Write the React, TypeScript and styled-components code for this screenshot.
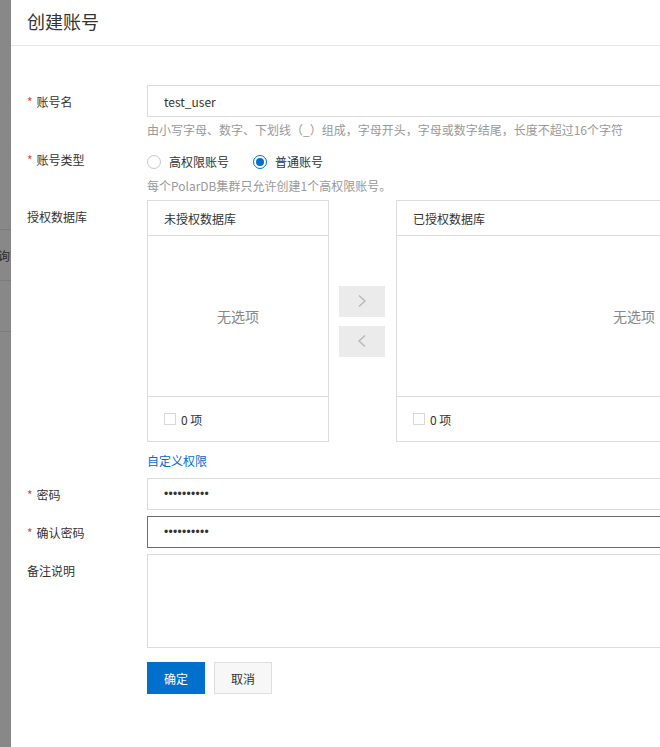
import React from "react";
import styled, { createGlobalStyle } from "styled-components";

const GlobalStyle = createGlobalStyle`
  html, body {
    margin: 0;
    padding: 0;
    overflow: hidden;
    background: #fff;
  }
  body {
    font-family: "Noto Sans CJK SC", "Liberation Sans", sans-serif;
    font-size: 12px;
    color: #333;
  }
  * {
    box-sizing: border-box;
  }
`;

const Page = styled.div`
  display: flex;
  width: 660px;
  height: 747px;
  overflow: hidden;
`;

// dimmed list page sitting behind the drawer
const Backdrop = styled.div`
  width: 11px;
  flex-shrink: 0;
  background: #888;
  overflow: hidden;
  display: flex;
  flex-direction: column;
`;

const BackdropRow = styled.div<{ $h: number }>`
  height: ${(p) => p.$h}px;
  flex-shrink: 0;
  border-bottom: 1px solid #7c7c7c;
  display: flex;
  align-items: center;
  white-space: nowrap;
  color: #2a2a2a;
  span {
    margin-left: -14px;
  }
`;

const Drawer = styled.div`
  width: 1000px;
  flex-shrink: 0;
  background: #fff;
  display: flex;
  flex-direction: column;
`;

const DrawerHeader = styled.div`
  height: 46px;
  padding-left: 16px;
  display: flex;
  align-items: center;
  border-bottom: 1px solid #e8e8e8;
  font-size: 18px;
  color: #333;
  padding-bottom: 4px;
`;

const DrawerBody = styled.div`
  padding: 39px 0 0 16px;
  display: flex;
  flex-direction: column;
`;

const FormItem = styled.div<{ $gap?: number }>`
  display: flex;
  margin-bottom: ${(p) => p.$gap ?? 5}px;
`;

const Label = styled.div`
  width: 120px;
  flex-shrink: 0;
  line-height: 32px;
  padding-top: 1px;
  color: #333;
`;

const Required = styled.span`
  color: #d9453a;
  margin-right: 4px;
`;

const Control = styled.div`
  display: flex;
  flex-direction: column;
`;

const TextInput = styled.input<{ $focused?: boolean }>`
  width: 700px;
  height: 32px;
  padding: 0 16px;
  border: 1px solid ${(p) => (p.$focused ? "#6b6b6b" : "#dcdcdc")};
  outline: none;
  font-family: inherit;
  font-size: 12px;
  color: #333;
  background: #fff;
  &[type="password"] {
    font-family: "Liberation Sans", sans-serif;
    letter-spacing: 0.3px;
  }
`;

const Hint = styled.div<{ $top?: number }>`
  margin-top: ${(p) => p.$top ?? 4}px;
  line-height: 18px;
  color: #999;
`;

const RadioGroup = styled.div`
  height: 32px;
  padding-top: 5px;
  display: flex;
  align-items: center;
  gap: 24px;
`;

const RadioItem = styled.label`
  display: flex;
  align-items: center;
  gap: 8px;
  color: #333;
`;

const RadioDot = styled.span<{ $checked?: boolean }>`
  width: 14px;
  height: 14px;
  border-radius: 50%;
  border: 1px solid ${(p) => (p.$checked ? "#0070cc" : "#c4c6cf")};
  display: flex;
  align-items: center;
  justify-content: center;
  &::after {
    content: "";
    width: 8px;
    height: 8px;
    border-radius: 50%;
    background: ${(p) => (p.$checked ? "#0070cc" : "transparent")};
  }
`;

const Transfer = styled.div`
  display: flex;
  align-items: center;
`;

const Panel = styled.div<{ $w: number }>`
  width: ${(p) => p.$w}px;
  height: 242px;
  border: 1px solid #dcdcdc;
  display: flex;
  flex-direction: column;
  flex-shrink: 0;
`;

const PanelHeader = styled.div`
  height: 35px;
  padding: 0 16px;
  border-bottom: 1px solid #dcdcdc;
  display: flex;
  align-items: center;
  color: #333;
`;

const PanelBody = styled.div`
  height: 161px;
  border-bottom: 1px solid #dcdcdc;
  display: flex;
  align-items: center;
  justify-content: center;
  font-size: 14px;
  color: #888;
`;

const PanelFooter = styled.div`
  flex: 1;
  padding: 0 16px;
  display: flex;
  align-items: center;
  gap: 5px;
  color: #333;
`;

const Checkbox = styled.span`
  width: 12px;
  height: 12px;
  border: 1px solid #d8d8d8;
  background: #fff;
`;

const MoveButtons = styled.div`
  display: flex;
  flex-direction: column;
  gap: 9px;
  margin: 0 11px 0 10px;
`;

const MoveButton = styled.button`
  width: 46px;
  height: 31px;
  border: none;
  background: #ebebeb;
  display: flex;
  align-items: center;
  justify-content: center;
  padding: 0;
  cursor: not-allowed;
`;

const LinkRow = styled.div`
  line-height: 28px;
  color: #0070cc;
  cursor: pointer;
`;

const TextArea = styled.textarea`
  width: 700px;
  height: 94px;
  border: 1px solid #dcdcdc;
  resize: none;
  outline: none;
  padding: 6px 16px;
  font-family: inherit;
  font-size: 12px;
`;

const Actions = styled.div`
  display: flex;
  gap: 9px;
  margin-top: 14px;
  padding-left: 120px;
`;

const Button = styled.button<{ $primary?: boolean }>`
  min-width: 58px;
  height: 32px;
  padding: 0 16px;
  font-family: inherit;
  font-size: 12px;
  border: 1px solid ${(p) => (p.$primary ? "#0070cc" : "#dedede")};
  background: ${(p) => (p.$primary ? "#0070cc" : "#f7f7f7")};
  color: ${(p) => (p.$primary ? "#fff" : "#333")};
  cursor: pointer;
`;

const Chevron = ({ dir }: { dir: "left" | "right" }) => (
  <svg width="10" height="14" viewBox="0 0 10 14">
    <path
      d={dir === "right" ? "M2 1.5 L8 7 L2 12.5" : "M8 1.5 L2 7 L8 12.5"}
      fill="none"
      stroke="#b8b8b8"
      strokeWidth="1.4"
    />
  </svg>
);

const TransferPanel = ({ title, width }: { title: string; width: number }) => (
  <Panel $w={width}>
    <PanelHeader>{title}</PanelHeader>
    <PanelBody>无选项</PanelBody>
    <PanelFooter>
      <Checkbox />
      <span>0 项</span>
    </PanelFooter>
  </Panel>
);

const App = () => {
  return (
    <Page>
      <GlobalStyle />
      <Backdrop>
        <BackdropRow $h={230} />
        <BackdropRow $h={51}>
          <span>查询到</span>
        </BackdropRow>
        <BackdropRow $h={51} />
      </Backdrop>
      <Drawer>
        <DrawerHeader>创建账号</DrawerHeader>
        <DrawerBody>
          <FormItem $gap={4}>
            <Label>
              <Required>*</Required>账号名
            </Label>
            <Control>
              <TextInput defaultValue="test_user" />
              <Hint>
                由小写字母、数字、下划线（_）组成，字母开头，字母或数字结尾，长度不超过16个字符
              </Hint>
            </Control>
          </FormItem>

          <FormItem>
            <Label>
              <Required>*</Required>账号类型
            </Label>
            <Control>
              <RadioGroup>
                <RadioItem>
                  <RadioDot />
                  高权限账号
                </RadioItem>
                <RadioItem>
                  <RadioDot $checked />
                  普通账号
                </RadioItem>
              </RadioGroup>
              <Hint $top={2}>每个PolarDB集群只允许创建1个高权限账号。</Hint>
            </Control>
          </FormItem>

          <FormItem $gap={5}>
            <Label>授权数据库</Label>
            <Control>
              <Transfer>
                <TransferPanel title="未授权数据库" width={182} />
                <MoveButtons>
                  <MoveButton>
                    <Chevron dir="right" />
                  </MoveButton>
                  <MoveButton>
                    <Chevron dir="left" />
                  </MoveButton>
                </MoveButtons>
                <TransferPanel title="已授权数据库" width={476} />
              </Transfer>
            </Control>
          </FormItem>

          <FormItem $gap={3}>
            <Label />
            <LinkRow>自定义权限</LinkRow>
          </FormItem>

          <FormItem>
            <Label>
              <Required>*</Required>密码
            </Label>
            <TextInput type="password" defaultValue="pass123456" />
          </FormItem>

          <FormItem>
            <Label>
              <Required>*</Required>确认密码
            </Label>
            <TextInput type="password" defaultValue="pass123456" $focused />
          </FormItem>

          <FormItem $gap={0}>
            <Label>备注说明</Label>
            <TextArea />
          </FormItem>

          <Actions>
            <Button $primary>确定</Button>
            <Button>取消</Button>
          </Actions>
        </DrawerBody>
      </Drawer>
    </Page>
  );
};

export default App;
